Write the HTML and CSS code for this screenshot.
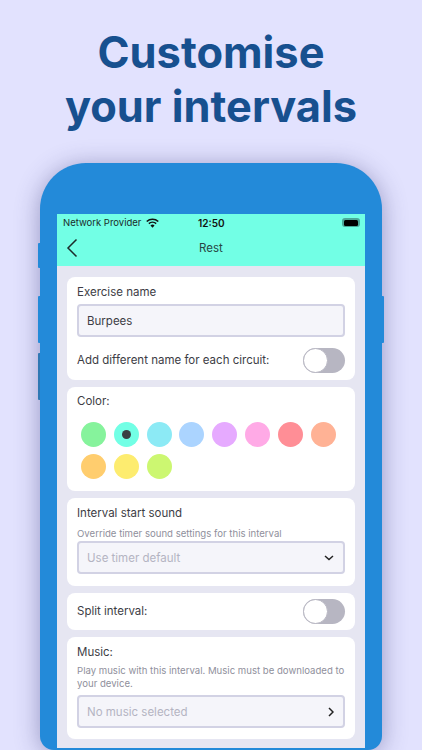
FILE: index.html
```html
<!DOCTYPE html>
<html lang="en">
<head>
<meta charset="utf-8">
<title>Customise your intervals</title>
<link rel="stylesheet" href="styles.css">
</head>
<body>
<main class="page">
  <h1 class="headline">Customise<br>your intervals</h1>
  <div class="phone">
    <span class="side side-l1"></span>
    <span class="side side-l2"></span>
    <span class="side side-l3"></span>
    <span class="side side-r1"></span>
    <div class="screen">
      <header class="top">
        <div class="status">
          <span class="carrier">Network Provider
            <svg class="wifi" viewBox="0 0 14 10" width="13" height="10"><path d="M7 10 4.800 7.600a3.200 3.200 0 0 1 4.400 0z" fill="#111"/><path d="M3.600 6.300a5 5 0 0 1 6.800 0l1.100-1.200a6.700 6.700 0 0 0-9 0z" fill="#111"/><path d="M1.400 4a8.300 8.300 0 0 1 11.200 0L13.800 2.800a10 10 0 0 0-13.600 0z" fill="#111"/></svg>
          </span>
          <span class="clock">12:50</span>
          <span class="battery"><span class="battery-fill"></span></span>
        </div>
        <div class="nav">
          <svg class="back" viewBox="0 0 12 20" width="12" height="20"><path d="M10.500 1.500 2 10l8.500 8.500" fill="none" stroke="#1c2b2a" stroke-width="1.500"/></svg>
          <span class="nav-title">Rest</span>
        </div>
      </header>
      <div class="content">
        <section class="card card-name">
          <label class="label">Exercise name</label>
          <div class="field field-value">Burpees</div>
          <div class="row row-tight">
            <span class="label">Add different name for each circuit:</span>
            <span class="toggle"><span class="knob"></span></span>
          </div>
        </section>
        <section class="card card-color">
          <div class="label">Color:</div>
          <div class="swatches">
            <span class="dot c1"></span>
            <span class="dot c2"><span class="pick"></span></span>
            <span class="dot c3"></span>
            <span class="dot c4"></span>
            <span class="dot c5"></span>
            <span class="dot c6"></span>
            <span class="dot c7"></span>
            <span class="dot c8"></span>
            <span class="dot c9"></span>
            <span class="dot c10"></span>
            <span class="dot c11"></span>
          </div>
        </section>
        <section class="card card-sound">
          <div class="label">Interval start sound</div>
          <p class="hint hint-sound">Override timer sound settings for this interval</p>
          <div class="field field-empty">
            <span>Use timer default</span>
            <svg viewBox="0 0 10 6" width="10" height="6"><path d="M1 1l4 3.500L9 1" fill="none" stroke="#222" stroke-width="1.500"/></svg>
          </div>
        </section>
        <section class="card card-split">
          <div class="row">
            <span class="label">Split interval:</span>
            <span class="toggle"><span class="knob"></span></span>
          </div>
        </section>
        <section class="card card-music">
          <div class="label">Music:</div>
          <p class="hint hint-music">Play music with this interval. Music must be downloaded to your device.</p>
          <div class="field field-empty">
            <span>No music selected</span>
            <svg viewBox="0 0 6 10" width="6" height="10"><path d="M1 1l4 4-4 4" fill="none" stroke="#222" stroke-width="1.500"/></svg>
          </div>
        </section>
      </div>
    </div>
  </div>
</main>
</body>
</html>
```
FILE: styles.css
```css
* { box-sizing: border-box; }
html, body { margin: 0; height: 750px; overflow: hidden; }
body { background: #e2e2fe; font-family: Inter, "Liberation Sans", sans-serif; color: #3d3d45; }
.page { width: 422px; height: 750px; display: flex; flex-direction: column; align-items: center; padding-top: 25px; }
.headline { margin: 0; font-size: 43.400px; line-height: 54px; font-weight: 700; text-align: center; color: #17508f; }
.phone { position: relative; width: 342px; height: 587px; margin-top: 30px; flex: none; padding: 51px 17px 2px; background: #238ad9; border-radius: 46px 46px 14px 14px; box-shadow: 0 3px 24px rgba(70, 70, 130, .48); }
.side { position: absolute; width: 2px; background: #238ad9; }
.side-l1 { left: -2px; top: 80px; height: 25px; border-radius: 1px 0 0 1px; }
.side-l2 { left: -2px; top: 133px; height: 47px; border-radius: 1px 0 0 1px; }
.side-l3 { left: -2px; top: 190px; height: 47px; border-radius: 1px 0 0 1px; background: #2f78b4; }
.side-r1 { right: -2px; top: 133px; height: 47px; border-radius: 0 1px 1px 0; }
.screen { height: 534px; background: #e6e6f2; display: flex; flex-direction: column; }
.top { height: 52px; background: #72ffe5; flex: none; }
.status { height: 17px; display: flex; align-items: center; justify-content: space-between; padding: 0 6px; position: relative; font-size: 9.500px; color: #1b2b2a; }
.carrier { display: flex; align-items: center; gap: 5px; }
.wifi { flex: none; }
.clock { position: absolute; left: 141px; font-weight: 600; font-size: 10px; color: #111; }
.battery { width: 18px; height: 9px; margin-right: -1px; padding: 1.500px 2px; background: #4ba99a; border-radius: 3px; display: flex; }
.battery-fill { flex: 1; background: #000; border-radius: 1.500px; }
.nav { height: 35px; display: flex; align-items: center; justify-content: center; position: relative; }
.back { position: absolute; left: 9px; top: 7px; }
.nav-title { font-size: 11.500px; color: #284644; margin-top: -1px; }
.content { flex: 1; padding: 11px 10px 0; display: flex; flex-direction: column; gap: 7px; }
.card { background: #fff; border-radius: 8px; padding: 0 10px; flex: none; }
.card-name { height: 103px; padding-top: 8px; }
.card-color { height: 104px; padding-top: 7px; }
.card-sound { height: 88px; padding-top: 8px; }
.card-split { height: 37px; display: flex; flex-direction: column; justify-content: center; }
.card-music { height: 102px; padding-top: 8px; }
.label { display: block; font-size: 11.500px; line-height: 15px; color: #3d3d45; }
.row { display: flex; align-items: center; justify-content: space-between; }
.row-tight { margin-top: 11px; }
.field { height: 33px; border: 2px solid #d2d2e4; border-radius: 4px; background: #f5f5fa; display: flex; align-items: center; justify-content: space-between; padding: 0 9px 0 8px; font-size: 11.500px; }
.field-value { margin-top: 4px; color: #3d3d45; }
.field-empty { color: #b4b4c2; }
.toggle { width: 42px; height: 25px; background: #b7b6c2; border-radius: 13px; position: relative; flex: none; }
.knob { position: absolute; left: 0; top: 0; width: 25px; height: 25px; border-radius: 50%; background: #fff; border: 1px solid #b7b6c2; }
.swatches { display: grid; grid-template-columns: repeat(8, 25px); gap: 7px 7.800px; padding: 13px 4px 0; }
.dot { width: 25px; height: 25px; border-radius: 50%; display: flex; align-items: center; justify-content: center; }
.pick { width: 9px; height: 9px; border-radius: 50%; background: #3a3f42; }
.c1 { background: #86f39c; }
.c2 { background: #72ffe5; }
.c3 { background: #8ceaf5; }
.c4 { background: #abd4ff; }
.c5 { background: #e6aaff; }
.c6 { background: #ffaae6; }
.c7 { background: #ff8e96; }
.c8 { background: #ffb295; }
.c9 { background: #ffcd6e; }
.c10 { background: #fdec6f; }
.c11 { background: #ccf771; }
.hint { margin: 0; font-size: 9.600px; line-height: 13px; color: #8f8f9c; }
.hint-sound { margin-top: 6px; margin-bottom: 1px; }
.hint-music { margin-top: 4px; margin-bottom: 5px; }
```
